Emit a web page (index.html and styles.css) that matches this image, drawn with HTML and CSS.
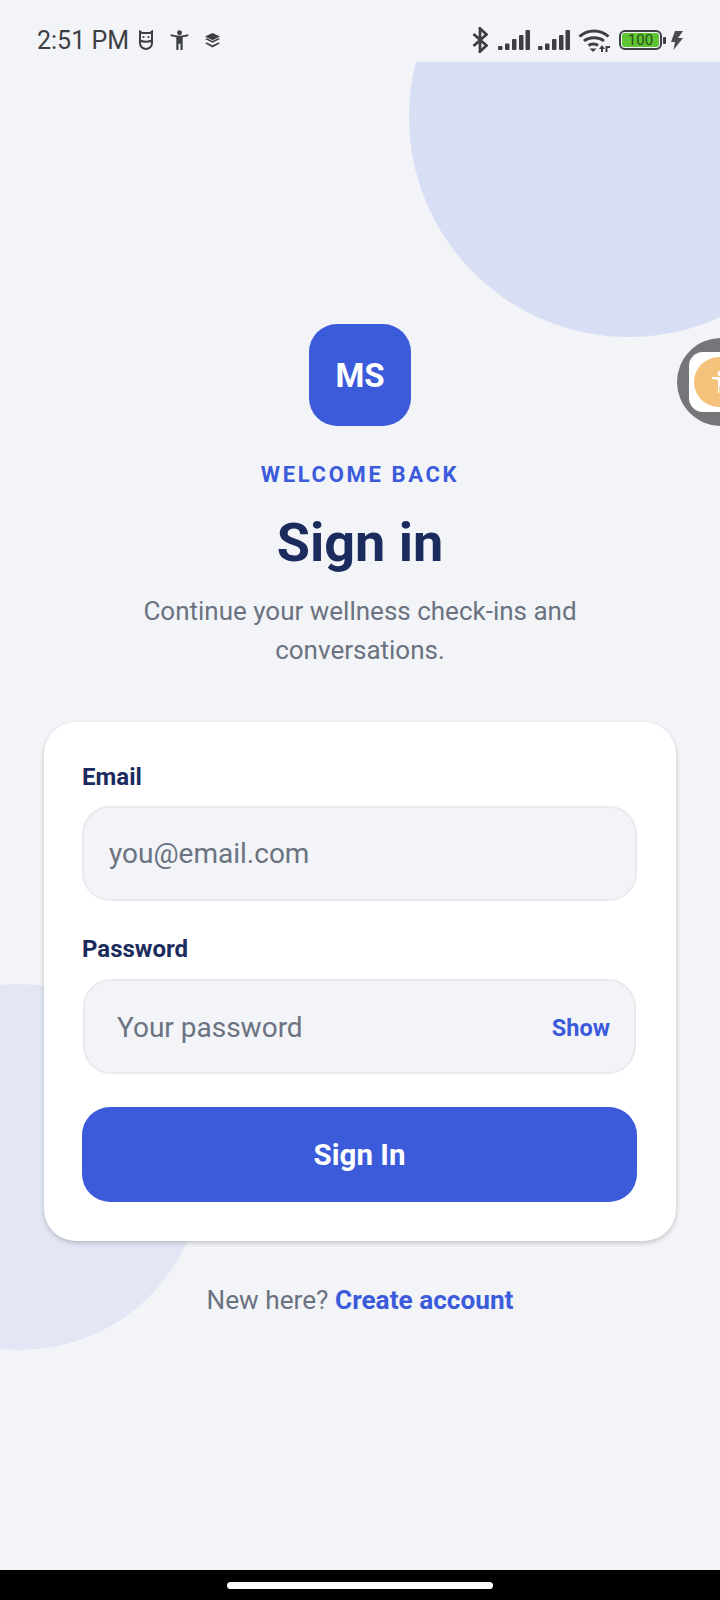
FILE: index.html
```html
<!DOCTYPE html>
<html lang="en">
<head>
    <meta charset="UTF-8">
    <meta name="viewport" content="width=device-width, initial-scale=1.0">
    <title>Sign in</title>
    <link rel="stylesheet" href="styles.css">
</head>
<body>
    <div class="phone">
        <div class="status-bar">
            <div class="status-left">
                <span class="clock">2:51 PM</span>
                <svg class="icon-face" width="16" height="20" viewBox="0 0 16 20" fill="none" stroke="#3d3f44" stroke-width="2">
                    <path d="M2 1.500L4 3h8l2-1.500V13a6 6 0 0 1-12 0z"/>
                    <path d="M2 10.500c3 1.500 9 1.500 12 0"/>
                    <circle cx="5.500" cy="7" r="1.100" fill="#3d3f44" stroke="none"/>
                    <circle cx="10.500" cy="7" r="1.100" fill="#3d3f44" stroke="none"/>
                </svg>
                <svg class="icon-person" width="19" height="20" viewBox="0 0 20 22" fill="#3d3f44">
                    <circle cx="10" cy="3" r="2.700"/>
                    <path d="M0 6.500l.6-1.700C3.500 5.800 7 6.300 10 6.300s6.500-.5 9.400-1.500L20 6.500c-2 .7-4.200 1.200-6.500 1.400V22h-2.400v-7H8.900v7H6.500V7.900C4.200 7.700 2 7.200 0 6.500z"/>
                </svg>
                <svg class="icon-layers" width="17" height="15" viewBox="0 0 18 16" fill="#3d3f44">
                    <path d="M9 0l8 3.800-8 3.800-8-3.800z"/>
                    <path d="M1 6.500l2-1 6 3 6-3 2 1-8 4z"/>
                    <path d="M1 11l2-1 6 3 6-3 2 1-8 4.500z"/>
                </svg>
            </div>
            <div class="status-right">
                <svg class="icon-bt" width="16" height="26" viewBox="0 0 16 26" fill="none" stroke="#3d3f44" stroke-width="2.800">
                    <path d="M1.500 7l13 11.500L8 24.500V1.500L14.500 7.500 1.500 19"/>
                </svg>
                <svg class="signal" width="32" height="20" viewBox="0 0 32 20" fill="#3d3f44">
                    <rect x="0" y="16" width="4.500" height="4" rx="1"/>
                    <rect x="7" y="13.500" width="4.500" height="6.500" rx="1"/>
                    <rect x="14" y="9" width="4.500" height="11" rx="1"/>
                    <rect x="21" y="5" width="4.500" height="15" rx="1"/>
                    <rect x="27.500" y="0" width="4.500" height="20" rx="1"/>
                </svg>
                <svg class="signal" width="32" height="20" viewBox="0 0 32 20" fill="#3d3f44">
                    <rect x="0" y="16" width="4.500" height="4" rx="1"/>
                    <rect x="7" y="13.500" width="4.500" height="6.500" rx="1"/>
                    <rect x="14" y="9" width="4.500" height="11" rx="1"/>
                    <rect x="21" y="5" width="4.500" height="15" rx="1"/>
                    <rect x="27.500" y="0" width="4.500" height="20" rx="1"/>
                </svg>
                <svg class="wifi" width="32" height="24" viewBox="0 0 32 24" fill="none" stroke="#3d3f44" stroke-width="3">
                    <path d="M1.500 8.500c8-7.500 21-7.500 29 0"/>
                    <path d="M6 13c5-4.500 15-4.500 20 0"/>
                    <path d="M10.500 17.500c2.500-2 7-2 9.500 0"/>
                    <path d="M11.500 20.500h7l-3.500 3.500z" fill="#3d3f44" stroke="none"/>
                    <path d="M24 17l-3 4h2v3h2v-3h2z" fill="#3d3f44" stroke="none"/>
                    <path d="M27.500 18h2v6h-2zM29.500 18h2.500v2h-2.500z" fill="#3d3f44" stroke="none"/>
                </svg>
                <div class="battery">
                    <div class="battery-body"><span class="battery-level">100</span></div>
                    <div class="battery-tip"></div>
                </div>
                <svg class="icon-bolt" width="12" height="19" viewBox="0 0 12 19" fill="#4a4c51">
                    <path d="M12 0L4 0 0 11h4L2.500 19 12 7H7z"/>
                </svg>
            </div>
        </div>

        <div class="screen">
            <div class="blob blob-top"></div>
            <div class="blob blob-bottom"></div>
            <div class="float-widget">
                <div class="float-inner">
                    <div class="float-dot">
                        <svg width="16" height="22" viewBox="0 0 16 22" fill="#fff">
                            <circle cx="8" cy="2.500" r="2.500"/>
                            <path d="M0 6h16v2l-6 1v13H8.800v-7H7.200v7H6V9L0 8z"/>
                        </svg>
                    </div>
                </div>
            </div>

            <div class="content">
                <div class="logo">MS</div>
                <div class="eyebrow">WELCOME BACK</div>
                <h1>Sign in</h1>
                <p class="subtitle">Continue your wellness check-ins and conversations.</p>

                <div class="card">
                    <label class="field-label" for="email">Email</label>
                    <input class="text-input" type="text" id="email" placeholder="you@email.com">

                    <label class="field-label label-password" for="password">Password</label>
                    <div class="password-box">
                        <input class="password-input" type="text" id="password" placeholder="Your password">
                        <span class="show-link">Show</span>
                    </div>

                    <button class="submit-btn">Sign In</button>
                </div>

                <p class="signup">New here? <a class="signup-link">Create account</a></p>
            </div>
        </div>

        <div class="nav-bar"><div class="home-pill"></div></div>
    </div>
</body>
</html>
```

FILE: styles.css
```css
/* PAGE */
* {
    box-sizing: border-box;
}
body {
    margin: 0;
    font-family: Roboto, "Liberation Sans", sans-serif;
    background-color: #f2f4f8;
}
.phone {
    display: flex;
    flex-direction: column;
    width: 720px;
    height: 1600px;
    overflow: hidden;
}

/* Status bar */
.status-bar {
    display: flex;
    justify-content: space-between;
    align-items: center;
    height: 62px;
    padding: 18px 37px 0 37px;
    background-color: #f2f4f8;
    position: relative;
    z-index: 2;
}
.status-left,
.status-right {
    display: flex;
    align-items: center;
}
.clock {
    font-size: 25px;
    color: #3d3f44;
    margin-right: 9px;
}
.icon-face {
    margin-right: 16px;
}
.icon-person {
    margin-right: 15px;
}
.icon-bt {
    margin-right: 10px;
}
.signal {
    margin-right: 8px;
}
.wifi {
    margin-right: 9px;
}
.icon-bolt {
    margin-left: 5px;
}
.battery {
    display: flex;
    align-items: center;
}
.battery-body {
    width: 43px;
    height: 20px;
    padding: 1px;
    border: 2px solid #3d3f44;
    border-radius: 6px;
}
.battery-level {
    display: block;
    height: 14px;
    line-height: 14px;
    font-size: 15px;
    text-align: center;
    color: #2c4a18;
    background-color: #5fc431;
    border-radius: 3px;
}
.battery-tip {
    width: 3px;
    height: 7px;
    margin-left: 1px;
    background-color: #3d3f44;
    border-radius: 1px;
}

/* Main screen */
.screen {
    flex: 1;
    position: relative;
    overflow: hidden;
}
.blob {
    position: absolute;
    border-radius: 50%;
}
.blob-top {
    width: 440px;
    height: 440px;
    left: 409px;
    top: -165px;
    background-color: #d8def3;
}
.blob-bottom {
    width: 366px;
    height: 366px;
    left: -163px;
    top: 922px;
    background-color: #e3e7f5;
}

/* floating bubble on the right edge */
.float-widget {
    position: absolute;
    left: 677px;
    top: 276px;
    width: 88px;
    height: 88px;
    padding: 14px 12px;
    border-radius: 50%;
    background-color: #75767a;
}
.float-inner {
    width: 64px;
    height: 60px;
    padding: 5px;
    border-radius: 14px;
    background-color: #fff;
}
.float-dot {
    display: flex;
    align-items: center;
    padding-left: 18px;
    width: 50px;
    height: 50px;
    border-radius: 50%;
    background-color: #f5c27c;
}

.content {
    display: flex;
    flex-direction: column;
    align-items: center;
    position: relative;
    padding: 262px 44px 0;
}
.logo {
    display: flex;
    justify-content: center;
    align-items: center;
    width: 102px;
    height: 102px;
    border-radius: 28px;
    background-color: #3b5bdb;
    color: #fff;
    font-size: 33px;
    font-weight: 700;
}
.eyebrow {
    margin-top: 37px;
    font-size: 22px;
    line-height: 24px;
    font-weight: 700;
    letter-spacing: 2.65px;
    color: #3b5bdb;
}
h1 {
    margin: 23px 0 0;
    font-size: 54px;
    line-height: 66px;
    font-weight: 700;
    color: #1c2b5e;
}
.subtitle {
    margin: 16px 0 0;
    width: 480px;
    font-size: 26px;
    line-height: 39px;
    text-align: center;
    color: #6b7280;
}

/* Sign in card */
.card {
    display: flex;
    flex-direction: column;
    width: 632px;
    height: 519px;
    margin-top: 52px;
    padding: 40px 39px 38px 38px;
    background: #fff;
    border-radius: 32px;
    box-shadow: 0 2px 5px rgba(0, 0, 0, 0.2);
}
.field-label {
    font-size: 24px;
    line-height: 30px;
    font-weight: 700;
    color: #1c2b5e;
}
.label-password {
    margin-top: 33px;
}
.text-input {
    width: 100%;
    height: 95px;
    margin-top: 14px;
    padding: 0 25px;
    border: 2px solid #e8eaef;
    border-radius: 28px;
    background-color: #f2f4f8;
    font-family: inherit;
    font-size: 28px;
    outline: none;
}
.password-box {
    display: flex;
    align-items: center;
    height: 95px;
    margin: 15px 1px 0;
    padding: 2px 24px 0 32px;
    border: 2px solid #e8eaef;
    border-radius: 28px;
    background-color: #f2f4f8;
}
.password-input {
    flex: 1;
    min-width: 0;
    padding: 0;
    border: none;
    background: none;
    font-family: inherit;
    font-size: 28px;
    outline: none;
}
.text-input::placeholder,
.password-input::placeholder {
    color: #6b7280;
    opacity: 1;
}
.show-link {
    font-size: 23.5px;
    font-weight: 700;
    color: #3b5bdb;
}
.submit-btn {
    height: 95px;
    margin-top: 33px;
    padding-top: 2px;
    border: none;
    border-radius: 28px;
    background-color: #3b5bdb;
    color: #fff;
    font-family: inherit;
    font-size: 29.5px;
    font-weight: 700;
}

.signup {
    margin: 42px 0 0;
    font-size: 26.2px;
    line-height: 34px;
    color: #6b7280;
}
.signup-link {
    font-weight: 700;
    color: #3b5bdb;
}

/* Bottom nav */
.nav-bar {
    display: flex;
    justify-content: center;
    height: 30px;
    padding-top: 12px;
    background-color: #000;
}
.home-pill {
    width: 266px;
    height: 7px;
    border-radius: 4px;
    background-color: #fff;
}
```
